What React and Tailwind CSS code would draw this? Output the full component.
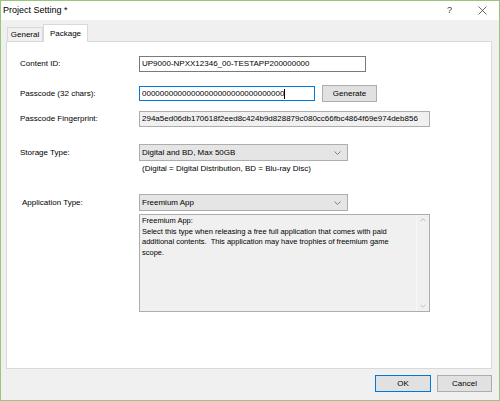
import React from 'react'

const font = "font-['Liberation_Sans',Arial,sans-serif]"

function Chevron({ className = '', w = 7, h = 4 }) {
  return (
    <svg width={w} height={h} viewBox="0 0 7 4" className={className}>
      <path d="M0.5 0.5 L3.5 3.5 L6.5 0.5" fill="none" stroke="currentColor" strokeWidth="0.9" />
    </svg>
  )
}

function Select({ value }) {
  return (
    <div className="w-[209px] h-[17px] border border-[#adadad] bg-[#e5e5e5] flex items-center justify-between pl-[2px] pr-[6px]">
      <span>{value}</span>
      <Chevron className="text-[#707070]" />
    </div>
  )
}

function Row({ label, labelClass = '', className = '', children }) {
  return (
    <div className={`flex items-center ${className}`}>
      <div className={`w-[119px] shrink-0 ${labelClass}`}>{label}</div>
      {children}
    </div>
  )
}

export default function App() {
  return (
    <div className={`w-[500px] h-[401px] border border-[#98c77c] flex flex-col bg-[#f0f0f0] text-[8px] text-black ${font}`}>
      <div className="h-[19px] shrink-0 bg-white flex items-center pl-[2px] pr-[12px]">
        <span className="text-[9px] flex-1">Project Setting *</span>
        <span className="text-[9px] mr-[26px] text-[#333]">?</span>
        <svg width="9" height="9" viewBox="0 0 9 9" className="text-[#444]">
          <path d="M0.5 0.5 L8.5 8.5 M8.5 0.5 L0.5 8.5" stroke="currentColor" strokeWidth="0.8" />
        </svg>
      </div>

      <div className="flex-1 flex flex-col pt-[4px] pl-[5px] pr-[7px]">
        <div className="flex items-end h-[17px] pl-[1px]">
          <div className="w-[36px] h-[14px] border border-b-0 border-[#d9d9d9] bg-[#f0f0f0] flex items-center justify-center">
            General
          </div>
          <div className="w-[45px] h-[18px] -mb-[1px] relative z-10 border border-b-0 border-[#d9d9d9] bg-white flex items-center justify-center">
            Package
          </div>
        </div>

        <div className="h-[328px] border border-[#d9d9d9] bg-white flex flex-col pl-[13px]">
          <Row label="Content ID:" className="mt-[14px]">
            <div className="w-[227px] h-[16px] border border-[#7a7a7a] flex items-center pl-[2px]">
              UP9000-NPXX12346_00-TESTAPP200000000
            </div>
          </Row>

          <Row label="Passcode (32 chars):" className="mt-[13px] h-[17px]">
            <div className="w-[176px] h-[15px] border border-[#0078d7] flex items-center pl-[2px]">
              <span>00000000000000000000000000000000</span>
              <span className="w-px h-[10px] bg-black" />
            </div>
            <div className="ml-[7px] w-[55px] h-[17px] border border-[#adadad] bg-[#e1e1e1] flex items-center justify-center">
              Generate
            </div>
          </Row>

          <Row label="Passcode Fingerprint:" className="mt-[9px]">
            <div className="w-[291px] h-[16px] border border-[#adadad] bg-[#f0f0f0] flex items-center pl-[2px] overflow-hidden whitespace-nowrap">
              294a5ed06db170618f2eed8c424b9d828879c080cc66fbc4864f69e974deb856
            </div>
          </Row>

          <Row label="Storage Type:" className="mt-[17px]">
            <Select value="Digital and BD, Max 50GB" />
          </Row>
          <div className="pl-[122px] mt-[3px] leading-[10px]">
            (Digital = Digital Distribution, BD = Blu-ray Disc)
          </div>

          <Row label="Application Type:" labelClass="pl-[2px]" className="mt-[20px]">
            <Select value="Freemium App" />
          </Row>

          <div className="ml-[119px] mt-[3px] w-[291px] h-[98px] border border-[#adadad] bg-[#f0f0f0] flex">
            <div className="flex-1 pl-[2px] pt-[1px] text-[7.5px] leading-[10.5px] whitespace-pre">
              {'Freemium App:\nSelect this type when releasing a free full application that comes with paid\nadditional contents.  This application may have trophies of freemium game\nscope.'}
            </div>
            <div className="w-[13px] border-l border-[#f7f7f7] flex flex-col items-center justify-between py-[3px] text-[#b0b0b0]">
              <Chevron className="rotate-180" w={6} h={4} />
              <Chevron w={6} h={4} />
            </div>
          </div>
        </div>

        <div className="flex justify-end gap-[6px] mt-[6px]">
          <div className="w-[56px] h-[17px] border border-[#0078d7] bg-[#e1e1e1] flex items-center justify-center">
            OK
          </div>
          <div className="w-[55px] h-[17px] border border-[#adadad] bg-[#e1e1e1] flex items-center justify-center">
            Cancel
          </div>
        </div>
      </div>
    </div>
  )
}
